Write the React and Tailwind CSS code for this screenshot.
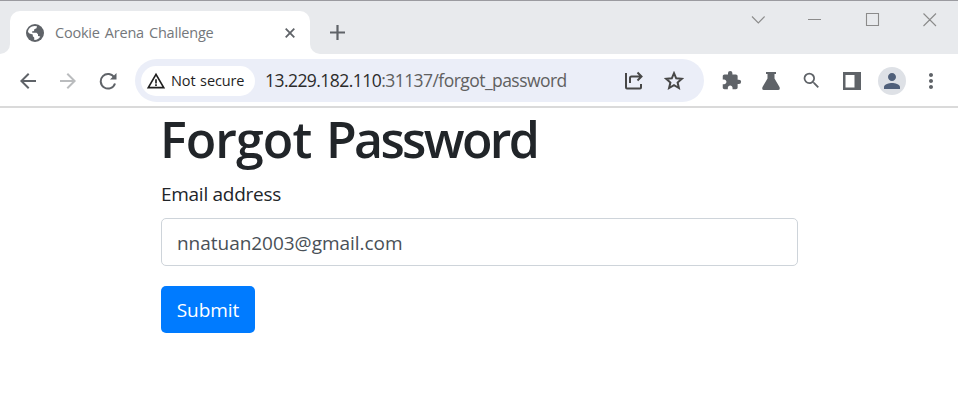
import { MdArrowBack, MdArrowForward, MdExtension, MdPerson, MdMoreVert, MdWarningAmber, MdSearch } from "react-icons/md";

function Slot({ width, children }) {
  return <div className={`flex h-full shrink-0 items-center justify-center ${width}`}>{children}</div>;
}

function TabStrip() {
  return (
    <div className="flex h-[54px] border-t border-[#9b9ba0] bg-[#e8eaed]">
      <div className="flex w-[10px] items-end bg-white">
        <div className="h-full w-full rounded-br-[10px] bg-[#e8eaed]" />
      </div>
      <div className="flex w-[300px] bg-[#e8eaed] pt-[10px]">
        <div className="flex flex-1 items-center rounded-t-[10px] bg-white pl-[16px] pr-[15px]">
          <svg className="size-[18px]" viewBox="0 0 18 18">
            <circle cx="9" cy="9" r="9" fill="#5f6368" />
            <path d="M2 8C2.300 4.500 5 2.200 8.500 2L11 2.300 10.500 4.300 8.300 5.200 8 7 6 7.500 6.300 8.800H10.500L12 10.300V12L14.300 12.600C13 15 11 16.100 8.300 16L8.200 13.500 6.800 12.300V10.500L3.500 9.500z" fill="#fff" />
          </svg>
          <span className="ml-[11px] flex-1 whitespace-nowrap text-[14.5px] tracking-[-0.210px] [word-spacing:1.500px] text-[#74777b]">Cookie Arena Challenge</span>
          <svg className="size-[10px]" viewBox="0 0 10 10" stroke="#5f6368" strokeWidth="1.800"><path d="M.7.7l8.600 8.600M9.300.7L.7 9.300" /></svg>
        </div>
      </div>
      <div className="flex flex-1 bg-white">
        <div className="flex flex-1 rounded-bl-[10px] bg-[#e8eaed]">
          <div className="flex flex-1 items-center pl-[20px] pt-[9px]">
            <svg className="size-[15px]" viewBox="0 0 15 15" stroke="#5f6368" strokeWidth="2.200"><path d="M7.500 0v15M0 7.500h15" /></svg>
          </div>
          <svg className="h-[40px] w-[220px]" viewBox="738 1 220 40" fill="none" stroke="#8b8b8b" strokeWidth="1.1">
            <path d="M752 16.5l6.3 6.5 6.3-6.5M808 19.5h13M866.5 13.5h12v12h-12zM923.500 13.500l12.500 12.500M936 13.500l-12.500 12.500" />
          </svg>
        </div>
      </div>
    </div>
  );
}

function Toolbar() {
  return (
    <div className="flex h-[54px] items-center border-b-2 border-[#dadada] bg-white pl-[7px] pt-px text-[#5f6368]">
      <Slot width="w-[41px]"><MdArrowBack className="size-[24px]" /></Slot>
      <Slot width="w-[40px]"><MdArrowForward className="size-[24px] text-[#babcbe]" /></Slot>
      <Slot width="w-[40px]">
        <svg className="size-[18px]" viewBox="0 0 18 18" fill="none">
          <path d="M15.300 5.500A7.300 7.300 0 1 0 16 11.500" stroke="currentColor" strokeWidth="2" />
          <path d="M17.500 1v6.500H11z" fill="currentColor" />
        </svg>
      </Slot>
      <div className="ml-[7px] flex h-[43px] w-[569px] items-center rounded-full bg-[#ebeef8] pl-[6px] pr-[20px]">
        <div className="flex h-[30px] w-[114px] items-center rounded-full bg-white pl-[5px]">
          <MdWarningAmber className="size-[20px] text-[#1f1f1f]" />
          <span className="ml-[5px] whitespace-nowrap text-[14.5px] font-medium tracking-[-0.120px] [word-spacing:1px] text-[#1f1f1f]">Not secure</span>
        </div>
        <span className="ml-[10px] flex-1 whitespace-nowrap text-[17.5px] tracking-[-0.550px] text-[#606060]"><span className="text-[#2b2b2b]">13.229.182.110</span>:31137/forgot_password</span>
        <svg className="mr-[20px] mt-px size-[20px]" viewBox="0 0 20 20" fill="none" stroke="#474747" strokeWidth="2">
          <path d="M2 2v14.500q0 1 1 1h13q1 0 1-1V13M6 12V7q0-1.500 1.500-1.500H17M13.500 1.500l4 4-4 4" />
        </svg>
        <svg className="size-[20px]" viewBox="0 0 20 20" fill="none" stroke="#474747" strokeWidth="2">
          <path d="M10 2.200l2.200 5.100 5.600.5-4.200 3.700 1.300 5.500L10 14.100 5.100 17l1.300-5.500-4.200-3.700 5.600-.5z" />
        </svg>
      </div>
      <div className="flex h-full flex-1 pl-[7px]">
        <Slot width="w-[41px]"><MdExtension className="size-[21px]" /></Slot>
        <Slot width="w-[38px]">
          <svg className="size-[20px]" viewBox="0 0 20 20" fill="currentColor"><path d="M5 1h10v2h-1.500v4.500l5 8.500q1 3-1.500 3H3q-2.500 0-1.500-3l5-8.500V3H5z" /></svg>
        </Slot>
        <Slot width="w-[42px]"><MdSearch className="size-[21px]" /></Slot>
        <Slot width="w-[39px]">
          <svg className="size-[18px]" viewBox="0 0 18 18" fill="currentColor"><path fillRule="evenodd" d="M0 0h18v18H0zM2.500 3v12.500h9V3z" /></svg>
        </Slot>
        <Slot width="w-[41px]">
          <div className="flex size-[28px] items-center justify-center rounded-full bg-[#dee1e6]"><MdPerson className="size-[24px] text-[#50607a]" /></div>
        </Slot>
        <Slot width="w-[37px]"><MdMoreVert className="size-[24px]" /></Slot>
      </div>
    </div>
  );
}

export default function App() {
  return (
    <div className="h-[402px] w-[958px] overflow-hidden bg-white font-['Open_Sans','Noto_Sans',sans-serif]">
      <TabStrip />
      <Toolbar />
      <main className="ml-[161px] w-[637px] text-[#212529]">
        <h1 className="-ml-px h-[70px] whitespace-nowrap pt-px text-[50px] font-semibold leading-[60px] tracking-[-0.900px] [word-spacing:2.500px]">Forgot <span className="tracking-[-2.650px]">Password</span></h1>
        <label className="block h-[40px] text-[19px] leading-[32px] tracking-[-0.280px]">Email address</label>
        <input className="block h-[48px] w-full rounded-[5px] border border-[#ced4da] px-[15px] pt-px text-[19px] tracking-[-0.030px] text-[#495057] outline-none" defaultValue="nnatuan2003@gmail.com" />
        <button className="mt-[20px] h-[47px] w-[94px] rounded-[5px] bg-[#007bff] pt-px text-[19px] tracking-[-0.050px] text-white">Submit</button>
      </main>
    </div>
  );
}
